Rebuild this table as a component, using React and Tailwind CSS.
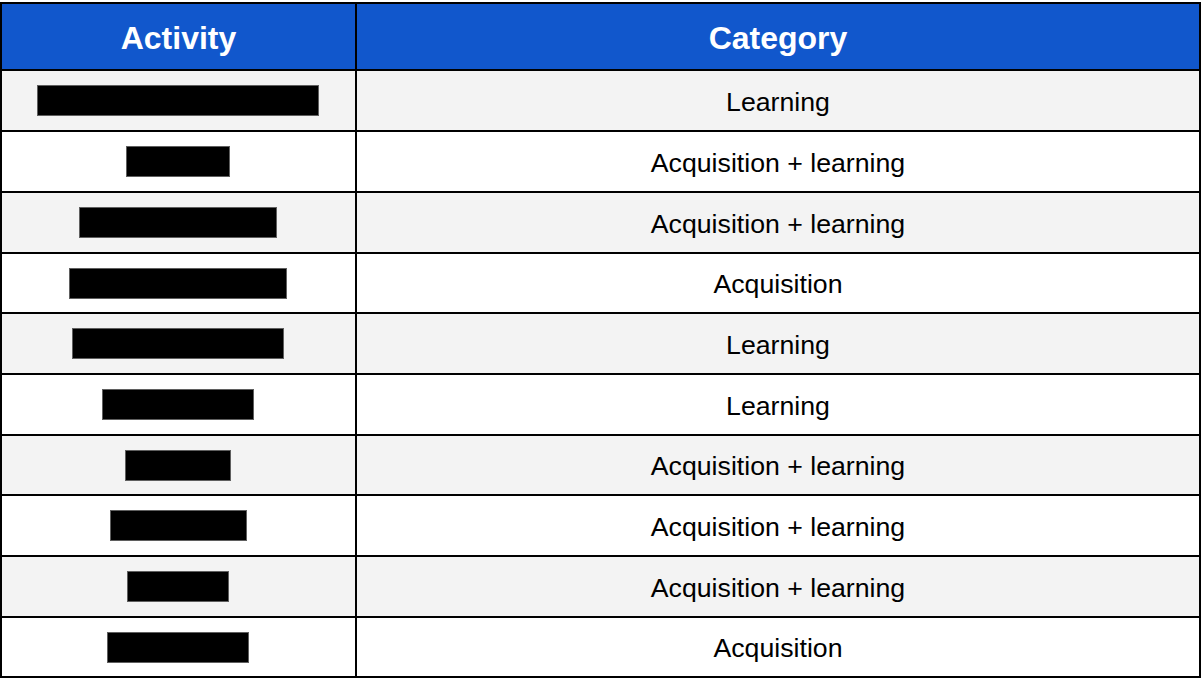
import React from "react";

const rows = [
  { bar: "w-[282px]", label: "Learning", h: "h-[61px]" },
  { bar: "w-[104px]", label: "Acquisition + learning", h: "h-[61px]" },
  { bar: "w-[198px]", label: "Acquisition + learning", h: "h-[61px]" },
  { bar: "w-[218px]", label: "Acquisition", h: "h-[60px]" },
  { bar: "w-[212px]", label: "Learning", h: "h-[61px]" },
  { bar: "w-[152px]", label: "Learning", h: "h-[61px]" },
  { bar: "w-[106px]", label: "Acquisition + learning", h: "h-[60px]" },
  { bar: "w-[137px]", label: "Acquisition + learning", h: "h-[61px]" },
  { bar: "w-[102px]", label: "Acquisition + learning", h: "h-[61px]" },
  { bar: "w-[142px]", label: "Acquisition", h: "h-[60px]" },
];

const App = () => {
  return (
    <div
      className="w-[1204px] h-[684px] bg-white pt-[2px] text-black"
      style={{ fontFamily: '"Liberation Sans", Arial, sans-serif' }}
    >
      <div className="w-[1201px] border-2 border-black flex flex-col">
        <div className="flex h-[65px] bg-[#1157cc] text-white font-bold text-[32px]">
          <div className="w-[355px] border-r-2 border-black flex items-center justify-center pt-[2px]">
            Activity
          </div>
          <div className="flex-1 flex items-center justify-center pt-[2px]">Category</div>
        </div>

        {rows.map((row, i) => (
          <div
            key={i}
            className={`flex border-t-2 border-black ${row.h} ${
              i % 2 === 0 ? "bg-[#f3f3f3]" : "bg-white"
            }`}
          >
            <div className="w-[355px] border-r-2 border-black flex items-center justify-center pr-[1px]">
              <div className={`${row.bar} h-[31px] bg-black border border-[#5f5f5f]`} />
            </div>
            <div className="flex-1 flex items-center justify-center text-[26.7px] pt-[3px]">
              {row.label}
            </div>
          </div>
        ))}
      </div>
    </div>
  );
};

export default App;
